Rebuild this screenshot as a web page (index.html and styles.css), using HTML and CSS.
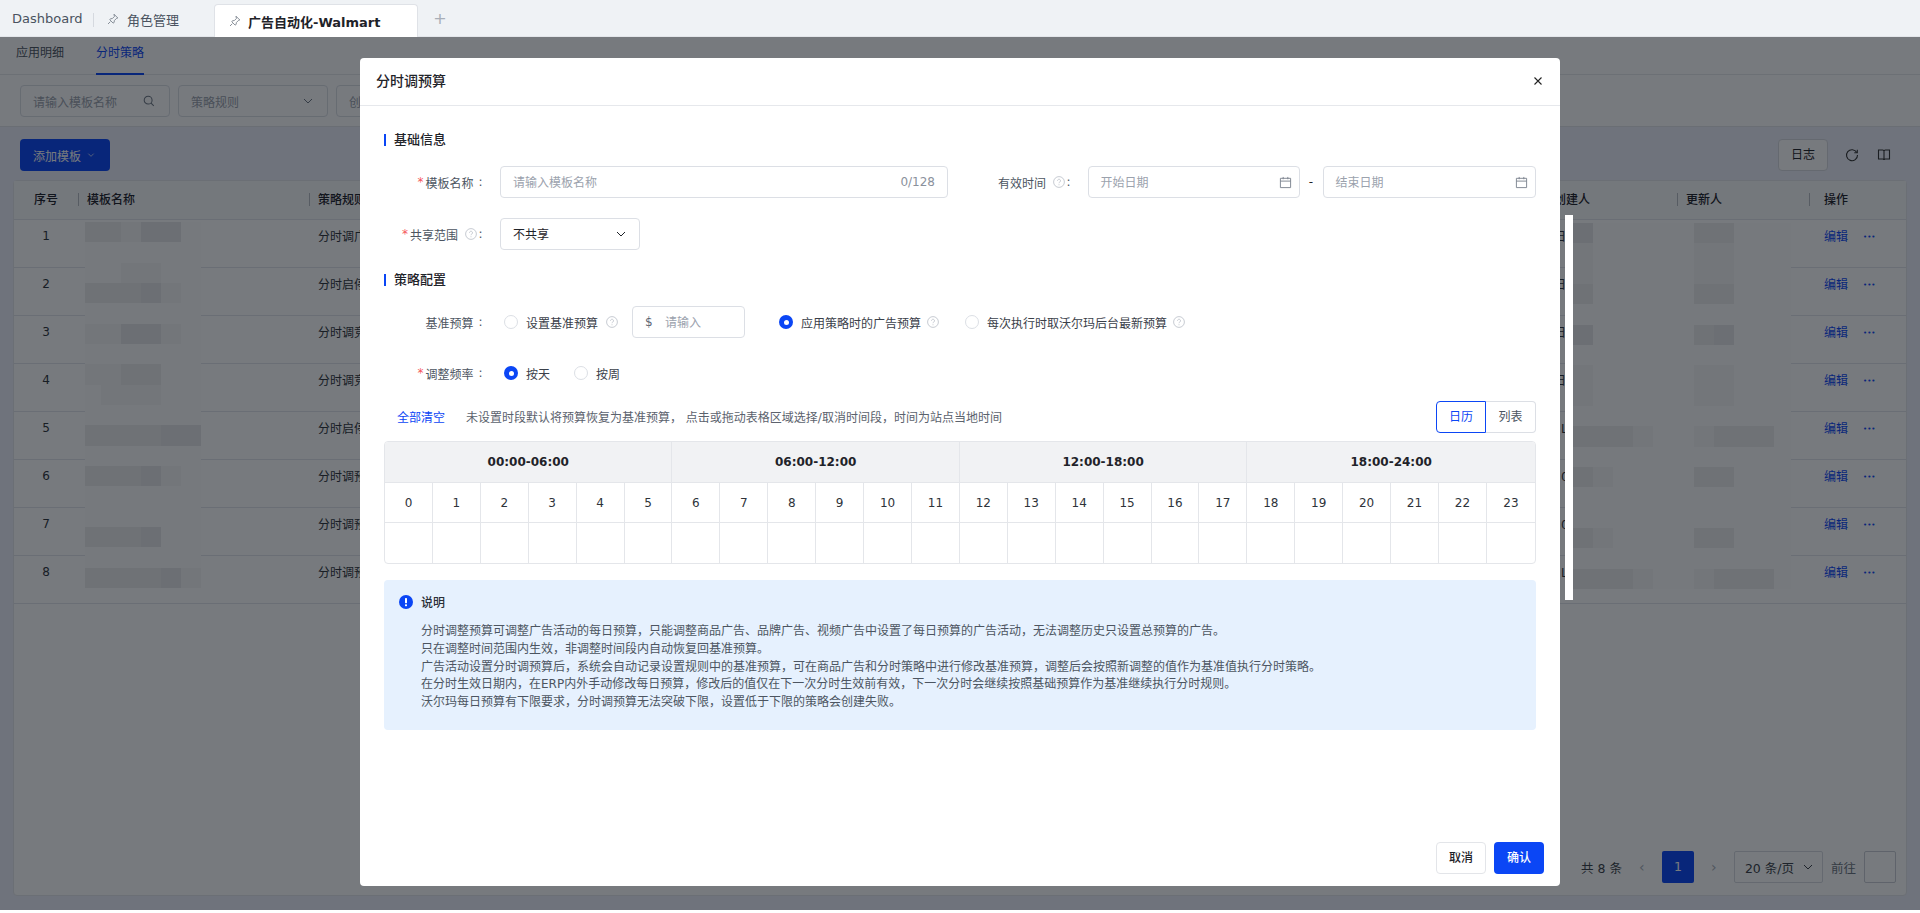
FILE: index.html
```html
<!DOCTYPE html>
<html lang="zh-CN">
<head>
<meta charset="utf-8">
<title>分时调预算</title>
<link rel="stylesheet" href="styles.css">
</head>
<body>
<svg class="defs" width="0" height="0" aria-hidden="true">
  <symbol id="i-help" viewBox="0 0 12 12"><circle cx="6" cy="6" r="5.4" fill="none" stroke="currentColor" stroke-width=".8"/><path d="M4.5 4.7a1.5 1.5 0 1 1 2.3 1.3c-.5.3-.8.6-.8 1.2" fill="none" stroke="currentColor" stroke-width=".8"/><circle cx="6" cy="8.8" r=".5" fill="currentColor"/></symbol>
  <symbol id="i-chev" viewBox="0 0 12 12"><path d="M2 4l4 4 4-4" fill="none" stroke="currentColor" stroke-width="1"/></symbol>
  <symbol id="i-cal" viewBox="0 0 14 14"><path d="M1.5 2.5h11v10h-11zM1.5 5.5h11M4.5 1v2.5M9.5 1v2.5" fill="none" stroke="currentColor" stroke-width="1"/></symbol>
  <symbol id="i-pin" viewBox="0 0 12 12"><path d="M7 1.2l3.8 3.8-1.4.5-2 2-.3 2-1 .6-3.3-3.3.6-1 2-.3 2-2zM3.3 8.7L1 11" fill="none" stroke="currentColor" stroke-width=".8"/></symbol>
</svg>
<div class="app">
  <nav class="tabbar">
    <span class="tab-home">Dashboard</span>
    <span class="tab-item"><svg class="ic12"><use href="#i-pin"/></svg>角色管理</span>
    <span class="tab-active"><svg class="ic12"><use href="#i-pin"/></svg>广告自动化-Walmart</span>
    <span class="tab-add">+</span>
  </nav>
  <main class="page">
    <div class="subtabs"><span>应用明细</span><span class="on">分时策略</span></div>
    <div class="filters">
      <div class="fbox"><span class="ph">请输入模板名称</span><svg class="ic12 search" viewBox="0 0 14 14"><circle cx="6" cy="6" r="4.6" fill="none" stroke="currentColor" stroke-width="1.2"/><path d="M9.4 9.4l3.2 3.2" stroke="currentColor" stroke-width="1.2"/></svg></div>
      <div class="fbox"><span class="ph">策略规则</span><svg class="ic12"><use href="#i-chev"/></svg></div>
      <div class="fbox"><span class="ph">创建人</span></div>
    </div>
    <div class="actions">
      <span class="add-btn">添加模板<svg class="ic8"><use href="#i-chev"/></svg></span>
      <span class="spacer"></span>
      <span class="log-btn">日志</span>
      <svg class="ic14 act-ic" viewBox="0 0 14 14"><path d="M11.8 4.5A5.5 5.5 0 1 0 12.5 7" fill="none" stroke="currentColor" stroke-width="1.1"/><path d="M12.3 1.8v3h-3" fill="none" stroke="currentColor" stroke-width="1.1"/></svg>
      <svg class="ic14 act-ic" viewBox="0 0 14 14"><path d="M1.5 2h4.2c.8 0 1.3.4 1.3 1v9c0-.6-.5-1-1.3-1H1.5zM12.5 2H8.3C7.5 2 7 2.4 7 3v9c0-.6.5-1 1.3-1h4.2z" fill="none" stroke="currentColor" stroke-width="1.1"/></svg>
    </div>
    <section class="card">
      <div class="grid-table">
        <div class="gt-row gt-head"><span class="c-no">序号</span><span class="sep">模板名称</span><span class="sep">策略规则</span><span class="sep">创建人</span><span class="sep">更新人</span><span class="sep op">操作</span></div>
        <div class="gt-row"><span class="c-no">1</span><span></span><span>分时调广告预算</span><span>日</span><span></span><span class="op"><a>编辑</a><i class="more">•••</i></span></div>
        <div class="gt-row"><span class="c-no">2</span><span></span><span>分时启停广告</span><span>日</span><span></span><span class="op"><a>编辑</a><i class="more">•••</i></span></div>
        <div class="gt-row"><span class="c-no">3</span><span></span><span>分时调竞价</span><span>日</span><span></span><span class="op"><a>编辑</a><i class="more">•••</i></span></div>
        <div class="gt-row"><span class="c-no">4</span><span></span><span>分时调竞价</span><span>日</span><span></span><span class="op"><a>编辑</a><i class="more">•••</i></span></div>
        <div class="gt-row"><span class="c-no">5</span><span></span><span>分时启停广告</span><span class="peek">L</span><span></span><span class="op"><a>编辑</a><i class="more">•••</i></span></div>
        <div class="gt-row"><span class="c-no">6</span><span></span><span>分时调预算</span><span class="peek">0</span><span></span><span class="op"><a>编辑</a><i class="more">•••</i></span></div>
        <div class="gt-row"><span class="c-no">7</span><span></span><span>分时调预算</span><span class="peek">0</span><span></span><span class="op"><a>编辑</a><i class="more">•••</i></span></div>
        <div class="gt-row"><span class="c-no">8</span><span></span><span>分时调预算</span><span class="peek">L</span><span></span><span class="op"><a>编辑</a><i class="more">•••</i></span></div>
        <div class="mosaic mosaic-name">
          <b class="a"></b><b class="a"></b><b class="c"></b><b class="b"></b><b class="b"></b><b></b>
          <b></b><b></b><b></b><b></b><b></b><b></b>
          <b></b><b></b><b class="c"></b><b class="c"></b><b></b><b></b>
          <b class="a"></b><b class="a"></b><b class="a"></b><b class="b"></b><b class="c"></b><b></b>
          <b></b><b></b><b></b><b></b><b></b><b></b>
          <b class="c"></b><b class="c"></b><b class="b"></b><b class="b"></b><b class="c"></b><b></b>
          <b></b><b></b><b></b><b></b><b></b><b></b>
          <b class="c"></b><b class="c"></b><b class="a"></b><b class="a"></b><b></b><b></b>
          <b></b><b class="c"></b><b class="c"></b><b class="c"></b><b></b><b></b>
          <b></b><b></b><b></b><b></b><b></b><b></b>
          <b class="a"></b><b class="a"></b><b class="a"></b><b class="a"></b><b class="b"></b><b class="b"></b>
          <b></b><b></b><b></b><b></b><b></b><b></b>
          <b class="a"></b><b class="a"></b><b class="a"></b><b class="b"></b><b class="c"></b><b></b>
          <b></b><b></b><b></b><b></b><b></b><b></b>
          <b></b><b></b><b></b><b></b><b></b><b></b>
          <b class="a"></b><b class="a"></b><b class="a"></b><b class="b"></b><b></b><b></b>
          <b></b><b></b><b></b><b></b><b></b><b></b>
          <b class="a"></b><b class="a"></b><b class="a"></b><b class="a"></b><b class="b"></b><b class="c"></b>
        </div>
        <div class="mosaic mosaic-right">
          <b class="b"></b><b></b><b></b><b></b><b></b><b class="a"></b><b class="a"></b><b></b><b></b><b></b>
          <b class="c"></b><b></b><b></b><b></b><b></b><b class="c"></b><b class="c"></b><b></b><b></b><b></b>
          <b class="c"></b><b></b><b></b><b></b><b></b><b class="c"></b><b class="c"></b><b></b><b></b><b></b>
          <b class="a"></b><b></b><b></b><b></b><b></b><b class="a"></b><b class="a"></b><b></b><b></b><b></b>
          <b></b><b></b><b></b><b></b><b></b><b></b><b></b><b></b><b></b><b></b>
          <b class="b"></b><b></b><b></b><b></b><b></b><b class="a"></b><b class="b"></b><b></b><b></b><b></b>
          <b></b><b></b><b></b><b></b><b></b><b></b><b></b><b></b><b></b><b></b>
          <b class="c"></b><b></b><b></b><b></b><b></b><b class="c"></b><b class="c"></b><b></b><b></b><b></b>
          <b class="c"></b><b></b><b></b><b></b><b></b><b class="c"></b><b class="c"></b><b></b><b></b><b></b>
          <b></b><b></b><b></b><b></b><b></b><b></b><b></b><b></b><b></b><b></b>
          <b class="a"></b><b class="a"></b><b class="a"></b><b class="c"></b><b></b><b class="c"></b><b class="a"></b><b class="a"></b><b class="a"></b><b></b>
          <b></b><b></b><b></b><b></b><b></b><b></b><b></b><b></b><b></b><b></b>
          <b class="a"></b><b class="c"></b><b></b><b></b><b></b><b class="a"></b><b class="a"></b><b></b><b></b><b></b>
          <b></b><b></b><b></b><b></b><b></b><b></b><b></b><b></b><b></b><b></b>
          <b></b><b></b><b></b><b></b><b></b><b></b><b></b><b></b><b></b><b></b>
          <b class="a"></b><b class="c"></b><b></b><b></b><b></b><b class="a"></b><b class="a"></b><b></b><b></b><b></b>
          <b></b><b></b><b></b><b></b><b></b><b></b><b></b><b></b><b></b><b></b>
          <b class="a"></b><b class="a"></b><b class="a"></b><b class="c"></b><b></b><b class="c"></b><b class="a"></b><b class="a"></b><b class="a"></b><b></b>
        </div>
      </div>
      <div class="pager">
        <span>共 8 条</span>
        <span class="pg-arrow">‹</span>
        <span class="pg-cur">1</span>
        <span class="pg-arrow pg-next">›</span>
        <span class="pg-size">20 条/页<svg class="ic12"><use href="#i-chev"/></svg></span>
        <span class="pg-go">前往</span>
        <span class="pg-input"></span>
      </div>
    </section>
  </main>
</div>

<div class="overlay">
  <div class="modal">
    <header class="m-head"><h2>分时调预算</h2><svg class="m-close" viewBox="0 0 10 10"><path d="M1.5 1.5l7 7M8.5 1.5l-7 7" stroke="currentColor" stroke-width="1.1"/></svg></header>
    <div class="m-body">
      <h3 class="sec first">基础信息</h3>
      <div class="frow r1">
        <label class="lab"><em>*</em>模板名称<span class="colon wide-c">:</span></label>
        <div class="inp wide"><span class="ph">请输入模板名称</span><span class="count">0/128</span></div>
        <label class="lab2">有效时间<svg class="help"><use href="#i-help"/></svg><span class="colon">:</span></label>
        <div class="inp date"><span class="ph">开始日期</span><svg class="cal"><use href="#i-cal"/></svg></div>
        <span class="dash">-</span>
        <div class="inp date date2"><span class="ph">结束日期</span><svg class="cal"><use href="#i-cal"/></svg></div>
      </div>
      <div class="frow r2">
        <label class="lab"><em>*</em>共享范围<svg class="help"><use href="#i-help"/></svg><span class="colon">:</span></label>
        <div class="inp sel"><span>不共享</span><svg class="ic12"><use href="#i-chev"/></svg></div>
      </div>
      <h3 class="sec second">策略配置</h3>
      <div class="frow r3">
        <label class="lab">基准预算<span class="colon wide-c">:</span></label>
        <span class="radio"></span><span class="rtext">设置基准预算</span><svg class="help"><use href="#i-help"/></svg>
        <div class="inp money"><span class="cur">$</span><span class="ph">请输入</span></div>
        <span class="radio on r-b"></span><span class="rtext">应用策略时的广告预算</span><svg class="help h-tight"><use href="#i-help"/></svg>
        <span class="radio r-c"></span><span class="rtext">每次执行时取沃尔玛后台最新预算</span><svg class="help h-tight"><use href="#i-help"/></svg>
      </div>
      <div class="frow r4">
        <label class="lab"><em>*</em>调整频率<span class="colon wide-c">:</span></label>
        <span class="radio on"></span><span class="rtext">按天</span>
        <span class="radio r-w"></span><span class="rtext">按周</span>
      </div>
      <div class="sched-bar">
        <a class="clear">全部清空</a>
        <span class="hint">未设置时段默认将预算恢复为基准预算， 点击或拖动表格区域选择/取消时间段，时间为站点当地时间</span>
        <span class="seg"><span class="seg-on">日历</span><span class="seg-off">列表</span></span>
      </div>
      <table class="sched">
        <tr class="t-head"><th colspan="6">00:00-06:00</th><th colspan="6">06:00-12:00</th><th colspan="6">12:00-18:00</th><th colspan="6">18:00-24:00</th></tr>
        <tr class="t-hours"><td>0</td><td>1</td><td>2</td><td>3</td><td>4</td><td>5</td><td>6</td><td>7</td><td>8</td><td>9</td><td>10</td><td>11</td><td>12</td><td>13</td><td>14</td><td>15</td><td>16</td><td>17</td><td>18</td><td>19</td><td>20</td><td>21</td><td>22</td><td>23</td></tr>
        <tr class="t-cells"><td></td><td></td><td></td><td></td><td></td><td></td><td></td><td></td><td></td><td></td><td></td><td></td><td></td><td></td><td></td><td></td><td></td><td></td><td></td><td></td><td></td><td></td><td></td><td></td></tr>
      </table>
      <div class="note">
        <svg class="note-ic" viewBox="0 0 14 14"><circle cx="7" cy="7" r="7" fill="#0b46f5"/><rect x="6" y="3" width="2" height="5.2" rx=".6" fill="#fff"/><rect x="6" y="9.2" width="2" height="2" rx=".6" fill="#fff"/></svg>
        <div class="note-main">
          <strong>说明</strong>
          <p>分时调整预算可调整广告活动的每日预算，只能调整商品广告、品牌广告、视频广告中设置了每日预算的广告活动，无法调整历史只设置总预算的广告。</p>
          <p>只在调整时间范围内生效，非调整时间段内自动恢复回基准预算。</p>
          <p>广告活动设置分时调预算后，系统会自动记录设置规则中的基准预算，可在商品广告和分时策略中进行修改基准预算，调整后会按照新调整的值作为基准值执行分时策略。</p>
          <p>在分时生效日期内，在ERP内外手动修改每日预算，修改后的值仅在下一次分时生效前有效，下一次分时会继续按照基础预算作为基准继续执行分时规则。</p>
          <p>沃尔玛每日预算有下限要求，分时调预算无法突破下限，设置低于下限的策略会创建失败。</p>
        </div>
      </div>
    </div>
    <footer class="m-foot"><span class="btn-cancel">取消</span><span class="btn-ok">确认</span></footer>
  </div>
</div>
<div class="strip"></div>
</body>
</html>
```
FILE: styles.css
```css
* { box-sizing: border-box; }
html, body { margin: 0; height: 913px; overflow: hidden; background: #fff; }
body { font-family: "DejaVu Sans", "Noto Sans CJK SC", sans-serif; font-size: 12px; color: #1f2329; position: relative; }
.defs { position: absolute; }
.ic12 { width: 12px; height: 12px; flex: none; }
.ic14 { width: 14px; height: 14px; flex: none; }
.ic8 { width: 8px; height: 8px; flex: none; }

/* page behind */
.app { height: 910px; display: flex; flex-direction: column; background: #edf0fa; }
.tabbar { height: 37px; flex: none; display: flex; align-items: flex-end; background: #eff2f5; border-bottom: 1px solid #e3e6ea; font-size: 13px; position: relative; }
.tab-home { color: #4a5360; margin-left: 12px; height: 32px; line-height: 30px; width: 81px; position: relative; }
.tab-home::after { content: ""; position: absolute; left: 81px; top: 9px; height: 14px; border-right: 1px solid #d5d9df; }
.tab-item { width: 121px; height: 32px; display: flex; align-items: center; gap: 8px; padding-left: 14px; color: #4a5360; margin-bottom: 1px; }
.tab-item svg, .tab-active svg { color: #6d7682; }
.tab-active { width: 204px; height: 33px; margin-bottom: -1px; background: #fff; border: 1px solid #dfe2e7; border-bottom: 0; border-radius: 4px 4px 0 0; display: flex; align-items: center; gap: 7px; padding-left: 14px; font-weight: 700; color: #1f2329; }
.tab-add { margin-left: 12px; width: 20px; height: 32px; line-height: 30px; text-align: center; font-size: 16px; color: #a8aeb7; }

.page { flex: 1; display: flex; flex-direction: column; min-height: 0; }
.subtabs { height: 38px; flex: none; display: flex; gap: 32px; padding-left: 16px; background: #fff; border-bottom: 1px solid #e6e8ec; line-height: 32px; color: #4c5561; }
.subtabs span { height: 38px; }
.subtabs .on { color: #0b46f5; border-bottom: 2px solid #0b46f5; }
.filters { height: 52px; flex: none; display: flex; gap: 8px; padding: 10px 0 0 20px; background: #fff; border-bottom: 1px solid #e2e4e9; }
.fbox { width: 150px; height: 32px; border: 1px solid #dcdfe5; border-radius: 4px; display: flex; align-items: center; justify-content: space-between; padding: 0 13px 0 12px; color: #6e7783; background: #fff; }
.search { margin-right: 1px; }
.ph { color: #9ba2ad; }
.inp > .ph { margin-top: -2px; }
.actions { height: 53px; flex: none; display: flex; align-items: flex-start; padding: 12px 0 0 20px; }
.add-btn { width: 90px; height: 32px; background: #0b46f5; color: #fff; border-radius: 4px; display: flex; align-items: center; gap: 6px; padding-left: 13px; }
.spacer { flex: 1; }
.log-btn { width: 50px; height: 32px; border: 1px solid #d7dae0; border-radius: 4px; text-align: center; line-height: 30px; background: #fff; }
.act-ic { margin: 9px 0 0 17px; color: #333; }
.act-ic:last-child { margin-right: 29px; margin-left: 18px; }

.card { margin: 0 13px; height: 716px; flex: none; display: flex; flex-direction: column; background: #fff; border: 1px solid #e4e6ea; border-radius: 4px; }
.grid-table { flex: none; position: relative; height: 423px; }
.gt-row { display: grid; grid-template-columns: 64px 231px 1236px 132px 132px 97px; height: 48px; border-bottom: 1px solid #e3e5ea; align-items: start; color: #2e333a; }
.gt-row > span { padding: 8px 0 0 9px; line-height: 18px; }
.gt-head { height: 39px; background: #f9fafb; font-weight: 500; color: #1d2129; }
.gt-head > span { padding-top: 10px; }
.gt-row > .c-no { padding-left: 0; padding-top: 7px; text-align: center; }
.gt-head > .c-no { padding-top: 10px; }
.gt-row > .peek { padding-left: 16px; }
.gt-head .sep { position: relative; }
.gt-head .sep::before { content: ""; position: absolute; left: 0; top: 12px; height: 13px; border-left: 1px solid #b8bcc4; }
.gt-row > .op { padding-left: 15px; }
.gt-row a { color: #0b46f5; }
.more { color: #0b46f5; font-style: normal; font-size: 7px; margin-left: 15px; vertical-align: 2px; }
.mosaic { position: absolute; display: grid; }
.mosaic b { background: #fdfdfd; }
.mosaic b.a { background: #ededee; }
.mosaic b.b { background: #e6e6e8; }
.mosaic b.c { background: #f5f5f6; }
.mosaic-name { left: 71px; top: 41px; width: 116px; grid-template-columns: 16px 20px 20px 20px 20px 20px; grid-auto-rows: 20.33px; }
.mosaic-right { left: 1559px; top: 42px; width: 218px; grid-template-columns: 20px 20px 20px 20px 41px 20px 20px 20px 20px 17px; grid-auto-rows: 20.33px; }

.pager { flex: none; height: 32px; margin-top: auto; margin-bottom: 12px; display: flex; align-items: center; padding-left: 1567px; color: #3a3f47; font-size: 12.5px; }
.pg-arrow { margin-left: 17px; width: 6px; color: #a9afb9; font-size: 14px; }
.pg-cur { margin-left: 17px; width: 32px; height: 32px; background: #0b46f5; color: #fff; border-radius: 2px; text-align: center; line-height: 32px; }
.pg-next { margin-left: 17px; }
.pg-size { margin-left: 17px; width: 89px; height: 32px; border: 1px solid #d7dae0; border-radius: 2px; display: flex; align-items: center; justify-content: space-between; padding: 0 8px 0 10px; }
.pg-go { margin-left: 8px; color: #6c7480; }
.pg-input { margin-left: 8px; width: 32px; height: 32px; border: 1px solid #c9cdd4; border-radius: 2px; }

/* modal */
.overlay { position: absolute; left: 0; right: 0; top: 37px; height: 873px; background: rgba(8, 13, 20, .55); display: flex; justify-content: center; align-items: flex-start; padding-top: 21px; }
.modal { width: 1200px; height: 828px; background: #fff; border-radius: 4px; display: flex; flex-direction: column; }
.m-head { height: 48px; flex: none; border-bottom: 1px solid #e6e8ec; display: flex; align-items: center; justify-content: space-between; padding: 0 17px 2px 16px; }
.m-head h2 { margin: 0; font-size: 14px; line-height: 20px; font-weight: 500; color: #1f2329; }
.m-close { width: 10px; height: 10px; color: #222; }
.m-body { flex: 1; padding: 0 24px; min-height: 0; }
.m-foot { flex: none; height: 44px; padding: 0 16px 12px 0; display: flex; justify-content: flex-end; gap: 8px; }
.btn-cancel, .btn-ok { width: 50px; height: 32px; border-radius: 4px; text-align: center; line-height: 30px; font-weight: 500; }
.btn-cancel { border: 1px solid #e3e5e9; color: #1f2329; }
.btn-ok { background: #0b46f5; color: #fff; line-height: 32px; }

.sec { margin: 0; font-size: 13px; line-height: 18px; font-weight: 500; color: #1f2329; padding-left: 10px; position: relative; }
.sec::before { content: ""; position: absolute; left: 0; top: 3px; width: 2px; height: 12px; background: #0b46f5; }
.sec.first { margin-top: 25px; }
.sec.second { margin-top: 21px; }
.frow { display: flex; align-items: center; height: 32px; }
.r1 { margin-top: 17px; }
.r2 { margin-top: 20px; }
.r3 { margin-top: 17px; }
.r4 { margin-top: 19px; }
.lab { width: 103px; margin-right: 13px; flex: none; display: flex; justify-content: flex-end; align-items: center; color: #4c5561; white-space: pre; }
.lab em { color: #f5565b; font-style: normal; margin-right: 2px; }
.lab2 { margin-left: 50px; margin-right: 16px; display: flex; align-items: center; color: #4c5561; }
.help { width: 12px; height: 12px; margin-left: 7px; color: #b9bec6; flex: none; }
.colon { margin-left: 1.5px; width: 5px; }
.lab .colon { margin-right: 3.5px; }
.lab .wide-c { margin-left: 5px; }
.inp { height: 32px; border: 1px solid #dcdfe5; border-radius: 4px; display: flex; align-items: center; justify-content: space-between; padding: 0 12px; flex: none; }
.wide { width: 448px; }
.count { color: #8a919c; }
.date { width: 212px; padding-right: 7px; }
.date2 { width: 213px; }
.cal { width: 13px; height: 13px; color: #7b838f; }
.dash { width: 23px; text-align: center; }
.sel { width: 140px; }
.sel > span { margin-top: -2px; }
.radio { width: 14px; height: 14px; border: 1px solid #dcdfe5; border-radius: 50%; margin-left: 4px; flex: none; position: relative; }
.radio.on { border: 0; background: #0b46f5; }
.radio.on::after { content: ""; position: absolute; left: 4.5px; top: 4.5px; width: 5px; height: 5px; border-radius: 50%; background: #fff; }
.rtext { margin-left: 8px; color: #3a4049; }
.r3 .help { margin-left: 8px; }
.r3 .h-tight { margin-left: 6px; }
.money { width: 113px; justify-content: flex-start; margin-left: 14px; padding-left: 12px; }
.cur { color: #5e6672; width: 20px; }
.r-b { margin-left: 34px; }
.r-c { margin-left: 26px; }
.r-w { margin-left: 24px; }
.sched-bar { margin-top: 12px; height: 32px; display: flex; align-items: center; padding-left: 13px; }
.clear { color: #0b46f5; margin-top: -2px; }
.hint { margin-left: 21px; color: #5b626d; flex: 1; margin-top: -2px; }
.seg { display: flex; height: 32px; }
.seg span { width: 50px; text-align: center; line-height: 30px; }
.seg-on { border: 1px solid #0b46f5; border-radius: 4px 0 0 4px; color: #0b46f5; }
.seg-off { border: 1px solid #dcdfe5; border-left: 0; border-radius: 0 4px 4px 0; color: #4c5561; }
.sched { margin-top: 8px; width: 1152px; table-layout: fixed; border-collapse: separate; border-spacing: 0; border: 1px solid #e4e6ea; border-radius: 4px; overflow: hidden; }
.sched th, .sched td { border-right: 1px solid #e4e6ea; border-bottom: 1px solid #e4e6ea; padding: 0; text-align: center; }
.sched tr > :last-child { border-right: 0; }
.sched tr:last-child td { border-bottom: 0; }
.t-head th { height: 41px; background: #f1f2f4; font-weight: 700; color: #1f2329; }
.t-hours td { height: 40px; color: #2e333a; }
.t-cells td { height: 40px; }
.note { margin-top: 16px; width: 1152px; height: 150px; background: #e6f1fe; border-radius: 4px; display: flex; padding: 15px 0 0 15px; }
.note-ic { width: 14px; height: 14px; flex: none; margin-right: 8px; }
.note-main strong { display: block; font-weight: 500; line-height: 16px; color: #2a2f36; margin-bottom: 12px; }
.note-main p { margin: 0; line-height: 17.8px; color: #4c5561; }
.strip { position: absolute; left: 1565px; top: 215px; width: 8px; height: 385px; background: #fff; }
```
